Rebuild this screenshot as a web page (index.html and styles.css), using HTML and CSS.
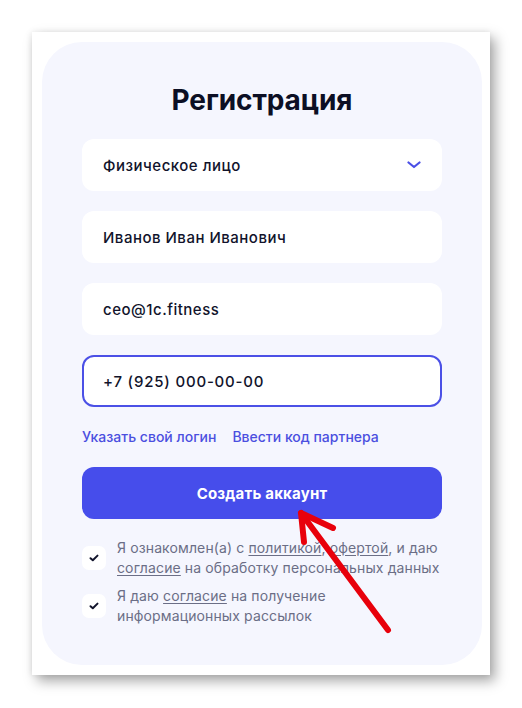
FILE: index.html
```html
<!DOCTYPE html>
<html lang="ru">
<head>
<meta charset="utf-8">
<title>Регистрация</title>
<link rel="stylesheet" href="styles.css">
</head>
<body>
<div class="page">
  <div class="panel">
    <div class="card">
      <h1 class="title">Регистрация</h1>
      <div class="fields">
        <div class="field select">
          <span>Физическое лицо</span>
          <svg class="chevron" width="14" height="8" viewBox="0 0 14 8"><path d="M1.5 1.5 L7 6 L12.5 1.5" fill="none" stroke="#4a4fe6" stroke-width="2.2" stroke-linecap="round" stroke-linejoin="round"/></svg>
        </div>
        <div class="field">Иванов Иван Иванович</div>
        <div class="field">ceo@1c.fitness</div>
        <div class="field active phone">+7 (925) 000-00-00</div>
      </div>
      <div class="links">
        <a class="link">Указать свой логин</a>
        <a class="link">Ввести код партнера</a>
      </div>
      <button class="submit">Создать аккаунт</button>
      <div class="agreements">
        <div class="agree">
          <span class="box"><svg width="10" height="8" viewBox="0 0 10 8"><path d="M1.5 4.2 L3.8 6.2 L8.5 1.6" fill="none" stroke="#11132b" stroke-width="2" stroke-linecap="round" stroke-linejoin="round"/></svg></span>
          <p class="agree-text">Я ознакомлен(а) с <u>политикой</u>, <u>офертой</u>, и даю<br><u>согласие</u> на обработку персональных данных</p>
        </div>
        <div class="agree">
          <span class="box"><svg width="10" height="8" viewBox="0 0 10 8"><path d="M1.5 4.2 L3.8 6.2 L8.5 1.6" fill="none" stroke="#11132b" stroke-width="2" stroke-linecap="round" stroke-linejoin="round"/></svg></span>
          <p class="agree-text">Я даю <u>согласие</u> на получение<br>информационных рассылок</p>
        </div>
      </div>
    </div>
  </div>
</div>
<svg class="arrow" width="522" height="708" viewBox="0 0 522 708">
  <g fill="none" stroke="#e8000b" stroke-width="6" stroke-linecap="round" stroke-linejoin="round">
    <path d="M388 630 L301 513"/>
    <path d="M333 528 L301 513 L304 542"/>
  </g>
</svg>
</body>
</html>
```
FILE: styles.css
```css
* { box-sizing: border-box; }
html, body { margin: 0; padding: 0; background: #ffffff; }
body {
  font-family: Inter, "Noto Sans", sans-serif;
  color: #11132b;
  position: relative;
  width: 522px;
  height: 708px;
  overflow: hidden;
}
.page { padding: 32px 0 0 32px; }
.panel {
  width: 458px;
  height: 643px;
  background: #ffffff;
  padding: 10px 8px 10px 10px;
  box-shadow: 5px 6px 12px rgba(0, 0, 0, 0.35), -1px 0 6px rgba(0, 0, 0, 0.08);
}
.card {
  height: 623px;
  background: #f5f6fe;
  border-radius: 40px;
  padding: 40px 40px 0 40px;
}
.title {
  margin: 0 0 21px 0;
  text-align: center;
  font-size: 28px;
  line-height: 36px;
  font-weight: 700;
  color: #0c0f24;
  letter-spacing: -0.1px;
}
.fields { display: flex; flex-direction: column; gap: 20px; }
.field {
  height: 52px;
  background: #ffffff;
  border-radius: 12px;
  padding: 0 20px 0 21px;
  display: flex;
  align-items: center;
  font-size: 15px;
  font-weight: 500;
  letter-spacing: 0.5px;
  color: #11132b;
}
.select { justify-content: space-between; padding-right: 20px; }
.chevron { display: block; margin-right: 1px; }
.active { border: 2px solid #4b50e6; padding-left: 19px; }
.phone { letter-spacing: 0.8px; }
.links {
  margin-top: 20px;
  display: flex;
  gap: 16px;
  line-height: 20px;
}
.link {
  font-size: 14px;
  font-weight: 500;
  color: #4b4fe0;
  text-decoration: none;
}
.submit {
  margin-top: 20px;
  width: 100%;
  height: 52px;
  border: 0;
  border-radius: 12px;
  background: #464deb;
  color: #ffffff;
  font-family: inherit;
  font-size: 15px;
  font-weight: 700;
  letter-spacing: 0.2px;
}
.agreements {
  margin-top: 19px;
  display: flex;
  flex-direction: column;
  gap: 8px;
}
.agree { display: flex; align-items: center; gap: 11px; }
.box {
  flex: none;
  width: 24px;
  height: 24px;
  background: #ffffff;
  border-radius: 7px;
  display: flex;
  align-items: center;
  justify-content: center;
}
.box svg { display: block; }
.agree-text {
  margin: 0;
  font-size: 14px;
  line-height: 20px;
  color: #6b6e86;
  letter-spacing: 0.12px;
  white-space: nowrap;
}
.agree-text u { text-underline-offset: 2px; }
.arrow { position: absolute; left: 0; top: 0; pointer-events: none; }
```
